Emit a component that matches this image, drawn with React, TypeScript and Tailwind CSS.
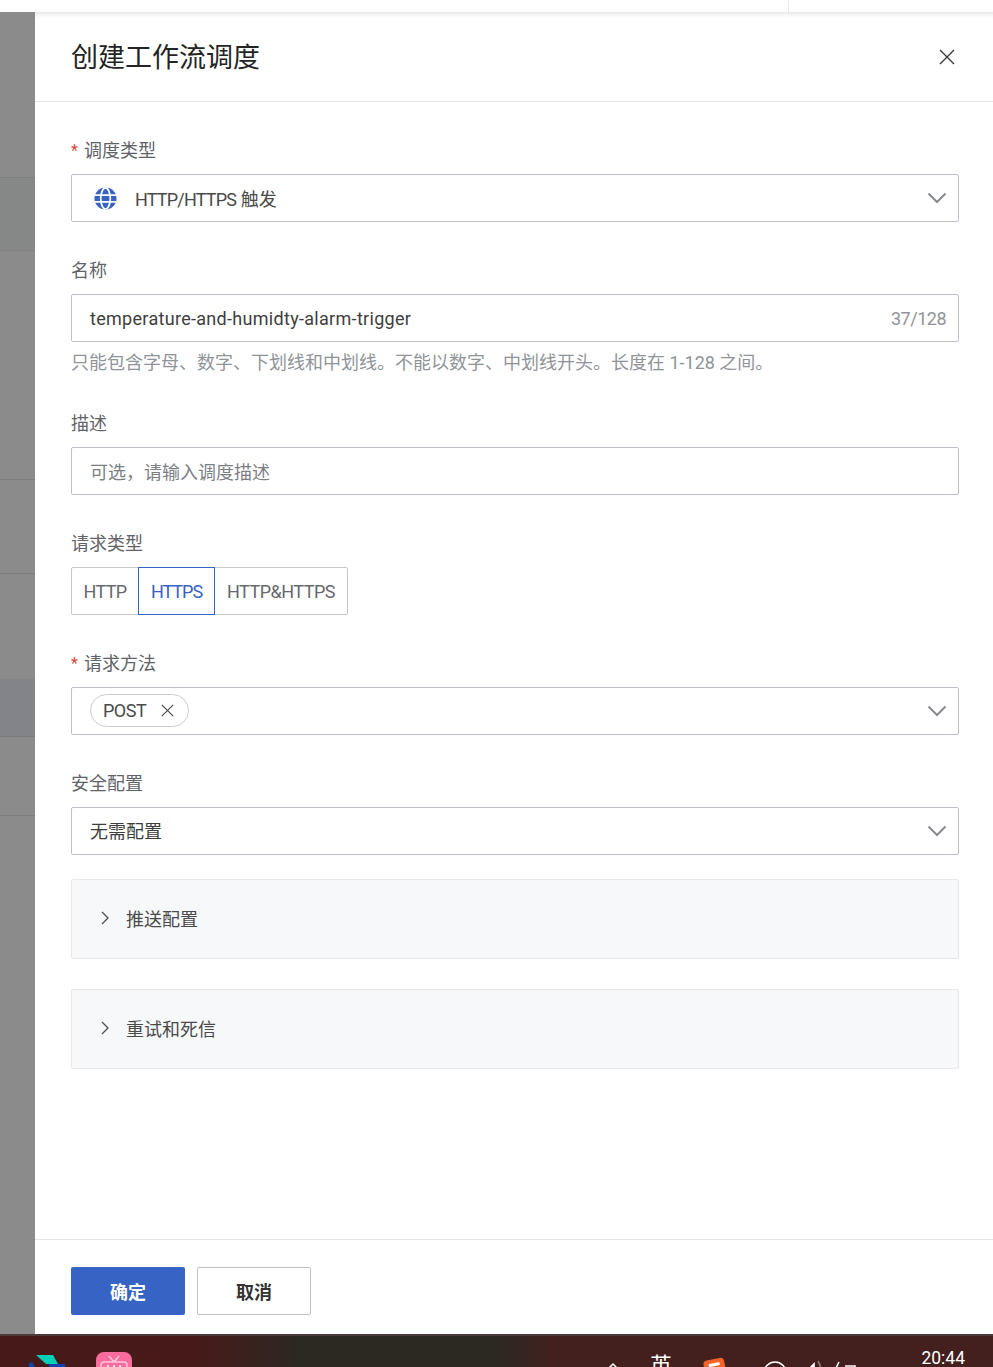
const font = "[font-family:'Roboto','Noto_Sans_CJK_SC',sans-serif]";

function Chevron() {
  return (
    <svg width="20" height="12" viewBox="0 0 20 12" fill="none" stroke="#868b90" strokeWidth="2" className="shrink-0">
      <path d="M1.5 1.5 10 10l8.5-8.5" />
    </svg>
  );
}

function Cross({ size, color }: { size: number; color: string }) {
  return (
    <svg width={size} height={size} viewBox="0 0 16 16" fill="none" stroke={color} strokeWidth="1.4" className="shrink-0">
      <path d="M1 1l14 14M15 1 1 15" />
    </svg>
  );
}

function Globe() {
  return (
    <svg width="23" height="23" viewBox="0 0 24 24" className="shrink-0">
      <circle cx="12" cy="12" r="11.5" fill="#3763c4" />
      <g fill="none" stroke="#fff" strokeWidth="1.8">
        <ellipse cx="12" cy="12" rx="5" ry="11" />
        <path d="M1 8.5h22M1 15.5h22" />
      </g>
    </svg>
  );
}

function Label({ text, required }: { text: string; required?: boolean }) {
  return (
    <div className="mb-3 flex h-6 items-center pt-[2px] text-[18px] leading-6 text-[#5f6368]">
      {required && <span className="mr-[6px] w-[7px] text-[16px] text-[#d9483b]">*</span>}
      {text}
    </div>
  );
}

function Collapse({ text }: { text: string }) {
  return (
    <div className="flex h-20 items-center rounded-[2px] border border-[#e6e8eb] bg-[#f7f8fa] pl-[29px]">
      <svg width="8" height="14" viewBox="0 0 8 14" fill="none" stroke="#4d4d4d" strokeWidth="1.3" className="mr-[17px] -translate-y-[1px]">
        <path d="M1 1l6 6-6 6" />
      </svg>
      <span className="text-[18px] text-[#4a4a4a]">{text}</span>
    </div>
  );
}

export default function App() {
  return (
    <div className={`flex h-[1367px] w-[993px] flex-col overflow-hidden bg-white ${font}`}>
      {/* page behind the drawer */}
      <div className="flex h-[12px] shrink-0 justify-end bg-white">
        <div className="mr-[204px] w-px bg-[#e8e8e8]" />
      </div>

      <div className="flex min-h-0 flex-1">
        {/* dimmed table rows */}
        <div className="flex w-[35px] shrink-0 flex-col bg-[#8b8b8b]">
          <div className="h-[166px] border-b border-[#7f7f7f]" />
          <div className="h-[73px] border-b border-[#7f807f] bg-[#868887]" />
          <div className="h-[229px] border-b border-[#7d7d7d]" />
          <div className="h-[94px] border-b border-[#7d7d7d]" />
          <div className="h-[105px]" />
          <div className="h-[58px] border-b border-[#797a7d] bg-[#82848a]" />
          <div className="h-[79px] border-b border-[#7d7d7d]" />
          <div className="flex-1" />
        </div>

        {/* drawer */}
        <div className="flex min-w-0 flex-1 flex-col bg-white">
          <div className="flex h-[90px] shrink-0 items-center justify-between border-b border-[#e4e6e8] bg-white pl-[36px] pr-[38px] shadow-[inset_0_7px_6px_-6px_rgba(0,0,0,0.14)]">
            <h1 className="translate-y-[1px] text-[27px] font-normal leading-9 text-[#242424]">创建工作流调度</h1>
            <Cross size={16} color="#3a3a3a" />
          </div>

          <div className="flex min-h-0 flex-1 flex-col pl-[36px] pr-[34px] pt-[36px]">
            <Label text="调度类型" required />
            <div className="flex h-12 items-center justify-between rounded-[2px] border border-[#bcc1c7] pl-[22px] pr-[11px]">
              <div className="flex items-center gap-[18px] text-[18px] text-[#4a4a4a]">
                <Globe />
                <span className="translate-y-[1px]">
                  <span className="tracking-[-0.8px]">HTTP/HTTPS</span> 触发
                </span>
              </div>
              <Chevron />
            </div>

            <div className="mt-9">
              <Label text="名称" />
              <div className="flex h-12 items-center justify-between rounded-[2px] border border-[#bcc1c7] pl-[18px] pr-[12px] text-[18px]">
                <span className="tracking-[0.3px] text-[#3e3e3e]">temperature-and-humidty-alarm-trigger</span>
                <span className="tracking-[-0.5px] text-[#8f9499]">37/128</span>
              </div>
              <p className="mt-2 translate-y-[1px] text-[18px] leading-6 text-[#8f9499]">
                只能包含字母、数字、下划线和中划线。不能以数字、中划线开头。长度在 1-128 之间。
              </p>
            </div>

            <div className="mt-[37px]">
              <Label text="描述" />
              <div className="flex h-12 items-center rounded-[2px] border border-[#bcc1c7] pl-[18px] pt-[2px] text-[18px] text-[#7b7f84]">
                可选，请输入调度描述
              </div>
            </div>

            <div className="mt-9">
              <Label text="请求类型" />
              <div className="flex h-12 w-[277px] rounded-[2px] border border-[#c4c8cc] text-[18px] text-[#66696d]">
                <div className="flex w-[66px] items-center justify-center tracking-[-0.7px]">HTTP</div>
                <div className="-my-px flex w-[77px] items-center justify-center border border-[#3763c4] tracking-[-1px] text-[#3763c4]">HTTPS</div>
                <div className="flex flex-1 items-center justify-center tracking-[-0.5px]">HTTP&amp;HTTPS</div>
              </div>
            </div>

            <div className="mt-9">
              <Label text="请求方法" required />
              <div className="flex h-12 items-center justify-between rounded-[2px] border border-[#bcc1c7] pl-[18px] pr-[11px]">
                <div className="flex h-[33px] w-[99px] -translate-y-[1px] items-center justify-between rounded-full border border-[#c8ccd0] pl-3 pr-[14px] text-[18px] text-[#4a4a4a]">
                  <span className="tracking-[-0.5px]">POST</span>
                  <Cross size={13} color="#4a4a4a" />
                </div>
                <Chevron />
              </div>
            </div>

            <div className="mt-9">
              <Label text="安全配置" />
              <div className="flex h-12 items-center justify-between rounded-[2px] border border-[#bcc1c7] pl-[18px] pr-[11px] text-[18px] text-[#3e3e3e]">
                <span>无需配置</span>
                <Chevron />
              </div>
            </div>

            <div className="mt-6">
              <Collapse text="推送配置" />
            </div>
            <div className="mt-[30px]">
              <Collapse text="重试和死信" />
            </div>
          </div>

          <div className="flex h-[95px] shrink-0 gap-3 border-t border-[#e4e6e8] pl-[36px] pt-[27px]">
            <button className="h-12 w-[114px] rounded-[2px] bg-[#3763c4] pt-[2px] text-[18px] font-bold text-white">确定</button>
            <button className="h-12 w-[114px] rounded-[2px] border border-[#bcc1c7] bg-white pt-[2px] text-[18px] font-bold text-[#333]">取消</button>
          </div>
        </div>
      </div>

      {/* windows taskbar, cut off by the screenshot */}
      <div className="flex h-[33px] shrink-0 items-start overflow-hidden border-t-2 border-[#4c3b39] bg-[linear-gradient(90deg,#471a1a_0%,#471a1a_20%,#2c2822_30%,#2c2822_50%,#43201e_56%,#43201e_100%)] text-white">
        <svg width="40" height="16" viewBox="0 0 40 16" className="ml-[29px] mt-[19px] shrink-0">
          <path d="M7 0h17l5 9H17z" fill="#00d0b8" />
          <path d="M0 8l3-1 5 9H0zM20 9h16v7H20z" fill="#1540b0" />
        </svg>
        <svg width="36" height="20" viewBox="0 0 36 20" className="ml-[27px] mt-[16px] shrink-0">
          <path d="M0 20V8a8 8 0 0 1 8-8h20a8 8 0 0 1 8 8v12z" fill="#fb6b9d" />
          <path d="M5 20v-7a3 3 0 0 1 3-3h20a3 3 0 0 1 3 3v7M13 4l5 6 5-6" fill="none" stroke="#ffc9dc" strokeWidth="1.5" />
          <path d="M12 13v7M18 13v7M24 13v7" stroke="#fff" strokeWidth="1.6" />
        </svg>
        <svg width="12" height="8" viewBox="0 0 12 8" fill="none" stroke="#fff" strokeWidth="1.5" className="ml-[475px] mt-[26px] shrink-0">
          <path d="M1 7l5-5 5 5" />
        </svg>
        <span className="ml-[31px] mt-[16px] text-[22px] leading-7">英</span>
        <div className="ml-[33px] mt-[23px] h-6 w-[21px] shrink-0 -rotate-12 rounded-sm bg-[#f2622a]">
          <div className="ml-[5px] mt-[4px] h-[3px] w-[11px] bg-white" />
        </div>
        <svg width="110" height="16" viewBox="0 0 110 16" fill="none" stroke="#fff" strokeWidth="1.6" className="ml-[25px] mt-[24px] shrink-0">
          <circle cx="24" cy="13" r="11" />
          <path d="M50 12h5l8-8v12z" fill="#fff" />
          <path d="M67 1q4 6 2 14" stroke="#8a7a78" />
          <path d="M88 2l-3 6h5l-2 5M94 6h10v10" />
        </svg>
        <span className="ml-auto mr-[28px] mt-[10px] text-[17.5px] leading-6">20:44</span>
      </div>
    </div>
  );
}
